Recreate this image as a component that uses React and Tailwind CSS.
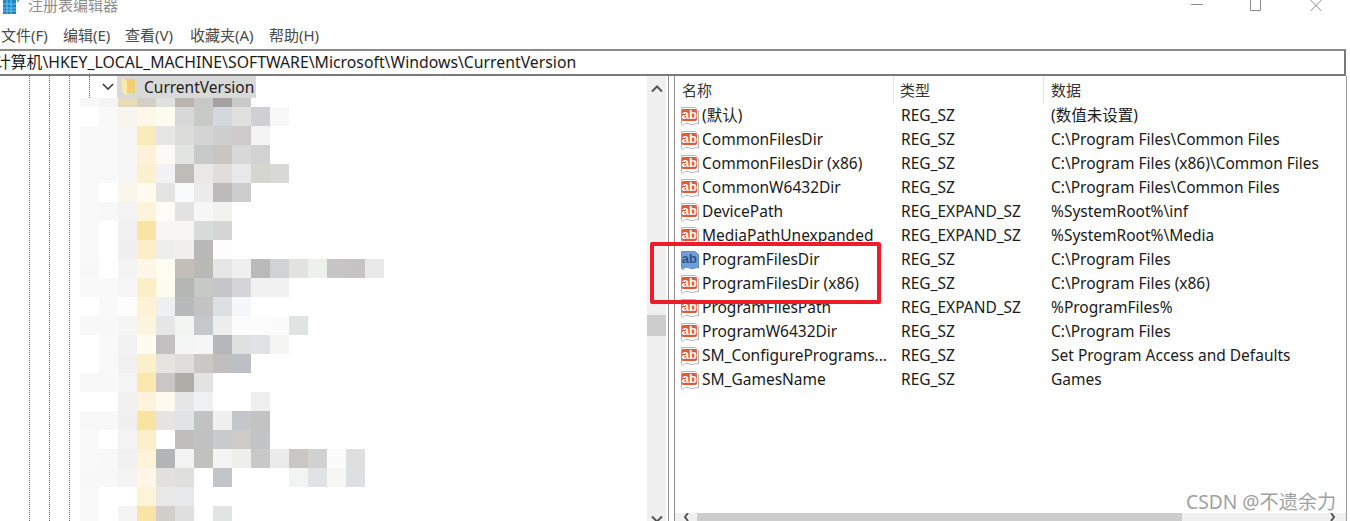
const FONT = '"Noto Sans", "Noto Sans CJK SC", sans-serif';

const MOSAIC = [
  ["f8f8f8","f4f4f4","e8dcb8","d5d0c5","e0e2e0","b8b4ae","c8c8c8","a4a2a0","c9c9c7"],
  ["ffffff","f9f9f9","f6f6ee","fef8e8","fefbf0","d8d8d8","c8cac8","d2d8dc","e0e0dc","d0d0d4","f8f8f8"],
  ["f9f9f9","f9f9f9","f6f6f6","f9ecbc","e6e6e4","dcdcda","d4d4d4","cfcfd0","cccacb","f4f4f4"],
  ["f9f9f9","f9f9f9","f6f6f6","fdf2d8","fcfaf4","e2e4e2","c8caca","c9c6c1","d8d8d8","d2d2d2"],
  ["f9f9f9","f9f9f9","f6f6f6","fbf0d0","f2f2f4","bdbcb8","e9e8e6","dfdedc","e8e8ea","d5d6d0","d8d8d6"],
  ["f9f9f9","ffffff","faf8ec","fefbec","e4e4e2","f8fafc","ececec","bcbabb","cdcdce"],
  ["f9f9f9","f8f8f8","f3f3f3","fcf4da","fffcf8","e2e2e2","f7f7f7","f2f2f0"],
  ["f9f9f9","ffffff","f1f1f1","f9e4a4","f7f6f4","f7f6f4","d9dada","d6d6d6"],
  ["f9f9f9","ffffff","f0f0f0","fcefc8","eeeeec","f1f0ee","b9b9b9","fefcfc"],
  ["f8f8f8","ffffff","f4f4f4","fef6e6","fffcf2","c2bfb8","b9bab5","e6e6e6","efefef","bababa","d0d2d4","e2e2e0","eef0ee","c5c5c5","c5c3c4","e9e9e9"],
  ["f9f9f9","f9f9f9","f6f6f6","fcefc8","fefbef","b5b7b4","c7c9c6","c6c6c8","d6d6d8","f1f1f1","f0f1f0"],
  ["ffffff","f9f9f9","fdfdfd","fdf2d6","eff0f2","b8b9bb","c3c3c3","dde0e3","f4f8fb"],
  ["f8f8f8","f8f8f8","f5f5f5","fcf5de","e6e6e6","f2f4f2","c6c7c9","ecedec","fcfcfc","fcfcfc","fbfbfb","e1e3e2"],
  ["ffffff","f9f9f9","f2f2f2","fefcf0","c2c0c1","f4f5f5","f6f6f6","b5b7b8","dfe1e1","e1e2e4","f5f6f4"],
  ["ffffff","f9f9f9","f1f1f1","fcefcc","e5e4e0","dedddb","c9c8c6","c1bec0","bcc0c4"],
  ["f8f8f8","f8f8f8","f5f5f5","fae8ae","c8c7c5","aeada8","e3e3e3"],
  ["ffffff","ffffff","f1f1f1","fdf3dc","fefbee","e6e6e6","f0f1f3","ffffff","ffffff","efefef"],
  ["f8f8f8","f8f8f8","f0f0f0","f9e3a0","e6e5e2","e0e4e4","c2c2c2","f0f0f0","c5c6c9","c3c3c3"],
  ["f9f9f9","ffffff","f3f3f3","fcefcb","ffffff","bfbebc","c1c1c1","c9cacc","cccbc9","c3c4c6"],
  ["f9f9f9","f8f8f8","f1f1f1","fdf3d8","b3b4b6","f3f3f3","c1c1bf","f4f4f4","eeeeec","c8c8c8","ebebeb","c8c7c5","d1d1d1","fbfbfb","dfdfdf"],
  ["f8f8f8","f8f8f8","f3f3f3","fef6e6","e2e1df","dfdfdd","ffffff","c2c6c9","ffffff","ffffff","ffffff","f1f4f3","e1e2e5","f6f6f4","dedfe1"],
  ["f9f9f9","ffffff","fefefe","fcf3d8","e8e8e6","e6e8eb"],
  ["f9f9f9","ffffff","f4f4f4","f9e4a8","d2cec9","dfdfdf","ffffff","e2e4e3"],
];

const ROWS = [
  ["(默认)", "REG_SZ", "(数值未设置)"],
  ["CommonFilesDir", "REG_SZ", "C:\\Program Files\\Common Files"],
  ["CommonFilesDir (x86)", "REG_SZ", "C:\\Program Files (x86)\\Common Files"],
  ["CommonW6432Dir", "REG_SZ", "C:\\Program Files\\Common Files"],
  ["DevicePath", "REG_EXPAND_SZ", "%SystemRoot%\\inf"],
  ["MediaPathUnexpanded", "REG_EXPAND_SZ", "%SystemRoot%\\Media"],
  ["ProgramFilesDir", "REG_SZ", "C:\\Program Files", true],
  ["ProgramFilesDir (x86)", "REG_SZ", "C:\\Program Files (x86)"],
  ["ProgramFilesPath", "REG_EXPAND_SZ", "%ProgramFiles%"],
  ["ProgramW6432Dir", "REG_SZ", "C:\\Program Files"],
  ["SM_ConfigurePrograms...", "REG_SZ", "Set Program Access and Defaults"],
  ["SM_GamesName", "REG_SZ", "Games"],
];

const MENUS = [["文件(F)", "w-[62px]"], ["编辑(E)", "w-[62px]"], ["查看(V)", "w-[65px]"], ["收藏夹(A)", "w-[79px]"], ["帮助(H)", "w-[60px]"]];

function AbIcon({ selected }) {
  return (
    <svg width="20" height="20" viewBox="0 0 20 20" className="shrink-0">
      <path d="M1.5 1.5H15L18.5 4.5V18C16 16.5 14 19.5 11 18.5S6 16.5 4 18.5S2 18.5 1.5 18Z" fill={selected ? "#6f9fd8" : "#fff"} stroke={selected ? "#5b8fd0" : "#b4b4b4"} />
      {!selected && <rect x="1.5" y="3" width="15.5" height="12" rx="2" fill="#e4573a" />}
      <text x="9.3" y="13" textAnchor="middle" fontSize="13" fontWeight="700" fontFamily='"Liberation Sans", sans-serif' fill={selected ? "#2f4f86" : "#fff"}>ab</text>
    </svg>
  );
}

function Mosaic() {
  return (
    <svg width="310" height="423" className="absolute left-[80px] top-[22px]">
      {MOSAIC.map((row, r) =>
        row.map((c, i) => (
          <rect key={r + "-" + i} x={i * 19} y={r === 0 ? 0 : 9 + (r - 1) * 19} width="19" height={r === 0 ? 9 : 19} fill={"#" + c} />
        ))
      )}
    </svg>
  );
}

function Dotted() {
  return <div className="w-[20px] shrink-0 border-l border-dotted border-[#6b6b6b]" />;
}

export default function App() {
  return (
    <div className="relative h-[521px] w-[1350px] overflow-hidden bg-white text-[15.5px] text-[#1a1a1a]" style={{ fontFamily: FONT }}>
      {/* title bar */}
      <div className="flex h-[21px] items-start overflow-hidden">
        <svg width="17" height="15" viewBox="0 0 17 15" className="ml-[3px] shrink-0">
          <rect x="0" y="0" width="13" height="14" fill="#1d86c8" />
          <path d="M4 0V14M8 0V14M0 4H13M0 8H13M0 11H13" stroke="#6cc0ee" />
          <path d="M14 0H17L14 3Z" fill="#5aa8d8" />
        </svg>
        <span className="ml-[8px] mt-[-6px] text-[15px] leading-[22px] text-[#8c8c8c]">注册表编辑器</span>
        <div className="ml-auto flex mr-[27px] items-start">
          <svg width="14" height="12" className="mr-[44px]"><path d="M0 4.5H12" stroke="#8c8c8c" /></svg>
          <svg width="14" height="12" className="mr-[46px]"><path d="M1.5 0V10.5H11.5V0" fill="none" stroke="#8c8c8c" /></svg>
          <svg width="14" height="12"><path d="M1.5 0L12.5 11M12.5 0L1.5 11" stroke="#8c8c8c" /></svg>
        </div>
      </div>

      {/* menu */}
      <div className="flex h-[28px] items-center pl-[1px] pt-[1px] text-[15px] text-[#4a4a4a]">
        {MENUS.map(([m, w]) => (
          <span key={m} className={w}>{m}</span>
        ))}
      </div>

      {/* address */}
      <div className="flex h-[27px] w-[1346px] items-center overflow-hidden border-t-[2px] border-r-[2px] border-b-[2px] border-t-[#8a8a8a] border-r-[#7a7a7a] border-b-[#7a7a7a] pt-[1px] text-[15.8px] leading-none">
        <span className="-ml-[5px] whitespace-nowrap">计算机\HKEY_LOCAL_MACHINE\SOFTWARE\Microsoft\Windows\CurrentVersion</span>
      </div>

      {/* panes */}
      <div className="flex h-[445px] w-[1346px]">
        {/* tree */}
        <div className="relative flex w-[647px] shrink-0 pl-[29px]">
          <Dotted />
          <Dotted />
          <Dotted />
          <div className="flex flex-col">
            <div className="flex h-[22px] items-center">
              <div className="h-[22px] w-[13px] border-l border-dotted border-[#6b6b6b]" />
              <svg viewBox="0 0 14 9" className="h-[8px] w-[12px]"><path d="M1 1L7 7L13 1" fill="none" stroke="#444" strokeWidth="2" /></svg>
              <div className="ml-[3px] flex h-[22px] w-[139px] items-center whitespace-nowrap bg-[#d9d9d9] pl-[5px]">
                <svg width="13" height="18" viewBox="0 0 13 18" className="shrink-0">
                  <rect x="3" y="1" width="10" height="14" fill="#f4cf6e" />
                  <path d="M0 0L5 3V18L0 14Z" fill="#fbe9a8" />
                </svg>
                <span className="ml-[9px] pt-[2px] text-[#222]">CurrentVersion</span>
              </div>
            </div>
          </div>
          <Mosaic />
        </div>

        {/* tree scrollbar */}
        <div className="flex w-[19px] shrink-0 flex-col items-center bg-[#f0f0f0]">
          <svg width="12" height="8" viewBox="0 0 12 8" className="mt-[9px] shrink-0"><path d="M1 6.5L6 1.5L11 6.5" fill="none" stroke="#555" strokeWidth="2" /></svg>
          <div className="mt-[222px] h-[21px] w-full shrink-0 bg-[#cdcdcd]" />
          <svg width="12" height="8" viewBox="0 0 12 8" className="mt-auto -mb-[2px] shrink-0"><path d="M1 1.5L6 6.5L11 1.5" fill="none" stroke="#555" strokeWidth="2" /></svg>
        </div>

        {/* splitter */}
        <div className="ml-[2px] flex w-[7px] shrink-0 justify-between">
          <div className="w-[1px] bg-[#8f8f8f]" />
          <div className="w-[1px] bg-[#8f8f8f]" />
        </div>

        {/* list */}
        <div className="flex min-w-0 flex-1 flex-col">
          <div className="flex h-[28px] shrink-0 items-center text-[15px] leading-[22px] text-[#333]">
            <span className="h-full w-[219px] border-r border-[#e5e5e5] pl-[7px] pt-[3px]">名称</span>
            <span className="h-full w-[150px] border-r border-[#e5e5e5] pl-[6px] pt-[3px]">类型</span>
            <span className="h-full pl-[7px] pt-[3px]">数据</span>
          </div>
          <div className="flex-1">
            {ROWS.map(([n, t, d, sel]) => (
              <div key={n} className="flex h-[24px] items-center whitespace-nowrap">
                <div className="flex w-[226px] items-center pl-[5px]">
                  <AbIcon selected={sel} />
                  <span className="ml-[2px] max-w-[188px] overflow-hidden">{n}</span>
                </div>
                <span className="w-[150px]">{t}</span>
                <span>{d}</span>
              </div>
            ))}
          </div>
          <div className="flex h-[8px] shrink-0 items-start bg-[#f0f0f0]">
            <svg width="8" height="8" className="ml-[7px] shrink-0"><path d="M6 0L3 4L6 8" fill="none" stroke="#555" strokeWidth="2" /></svg>
            <div className="ml-[7px] h-[8px] w-[485px] bg-[#cdcdcd]" />
            <svg width="8" height="8" className="ml-auto mr-[9px] shrink-0"><path d="M2 0L5 4L2 8" fill="none" stroke="#555" strokeWidth="2" /></svg>
          </div>
        </div>
      </div>

      {/* right window edge */}
      <div className="absolute left-[1346px] top-[76px] h-[445px] w-[1px] bg-[#9a9a9a]" />

      {/* annotation */}
      <div className="absolute left-[650px] top-[242px] h-[62px] w-[231px] rounded-[2px] border-[4px] border-[#ee1c2a]" />

      {/* watermark */}
      <div className="absolute left-[1186px] top-[488px] text-[19.2px] leading-[28px] text-[#a0a0a0]">CSDN @不遗余力</div>
    </div>
  );
}
